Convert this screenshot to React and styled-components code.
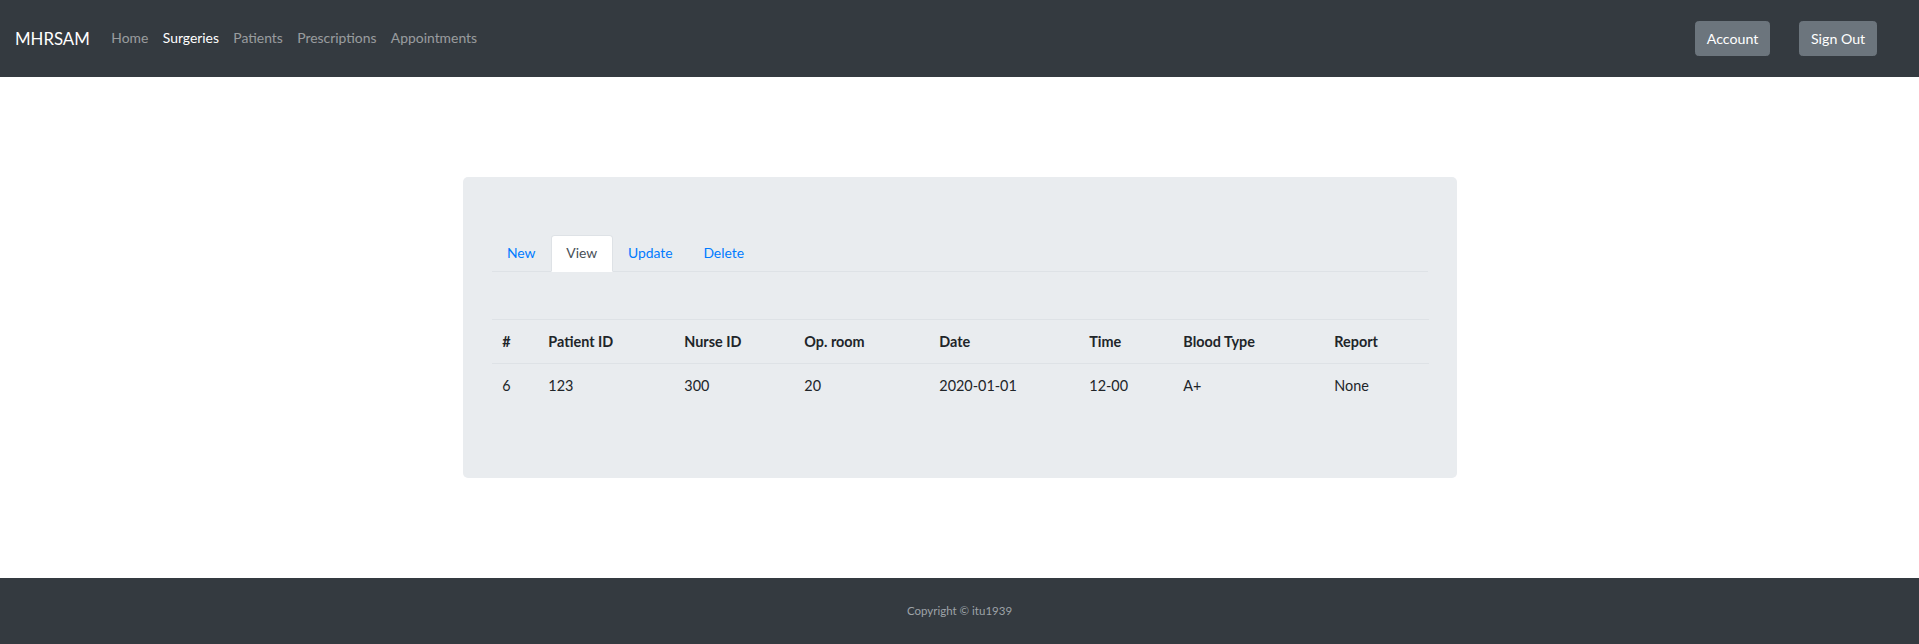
import styled, { createGlobalStyle } from "styled-components";

const GlobalStyle = createGlobalStyle`
  html, body {
    margin: 0;
    padding: 0;
  }
  body {
    font-family: Lato, "Liberation Sans", sans-serif;
    font-size: 14.4px;
    line-height: 1.5;
    color: #212529;
    background: #fff;
  }
  * {
    box-sizing: border-box;
  }
`;

const navLinks = [
  { label: "Home" },
  { label: "Surgeries", active: true },
  { label: "Patients" },
  { label: "Prescriptions" },
  { label: "Appointments" },
];

const tabs = [
  { label: "New" },
  { label: "View", active: true },
  { label: "Update" },
  { label: "Delete" },
];

const columns = [
  { title: "#", width: 46 },
  { title: "Patient ID", width: 136 },
  { title: "Nurse ID", width: 120 },
  { title: "Op. room", width: 135 },
  { title: "Date", width: 150 },
  { title: "Time", width: 94 },
  { title: "Blood Type", width: 151 },
  { title: "Report", width: 105 },
];

const rows = [["6", "123", "300", "20", "2020-01-01", "12-00", "A+", "None"]];

const App = () => {
  return (
    <Page>
      <GlobalStyle />
      <Navbar>
        <Brand href="#">MHRSAM</Brand>
        <NavList>
          {navLinks.map((link) => (
            <NavLink key={link.label} href="#" $active={link.active}>
              {link.label}
            </NavLink>
          ))}
        </NavList>
        <NavActions>
          <NavButton>Account</NavButton>
          <NavButton>Sign Out</NavButton>
        </NavActions>
      </Navbar>

      <Main>
        <Jumbotron>
          <Tabs>
            {tabs.map((tab) => (
              <Tab key={tab.label} $active={tab.active}>
                {tab.label}
              </Tab>
            ))}
          </Tabs>

          <Table>
            <colgroup>
              {columns.map((col) => (
                <col key={col.title} style={{ width: col.width }} />
              ))}
            </colgroup>
            <thead>
              <tr>
                {columns.map((col) => (
                  <Th key={col.title}>{col.title}</Th>
                ))}
              </tr>
            </thead>
            <tbody>
              {rows.map((row, idx) => (
                <tr key={idx}>
                  {row.map((cell, i) => (
                    <Td key={i}>{cell}</Td>
                  ))}
                </tr>
              ))}
            </tbody>
          </Table>
        </Jumbotron>
      </Main>

      <Footer>Copyright © itu1939</Footer>
    </Page>
  );
};

const Page = styled.div`
  min-height: 100vh;
  display: flex;
  flex-direction: column;
`;

const Navbar = styled.nav`
  height: 77px;
  padding: 0 42px 0 15px;
  background-color: #343a40;

  display: flex;
  align-items: center;
`;

const Brand = styled.a`
  font-size: 16.8px;
  line-height: 1.5;
  color: #fff;
  text-decoration: none;
  margin-right: 14.4px;
`;

const NavList = styled.div`
  display: flex;
  align-items: center;
  flex: 1;
`;

const NavLink = styled.a`
  padding: 7.2px;
  font-size: 13.9px;
  color: ${(p) => (p.$active ? "#fff" : "rgba(255, 255, 255, 0.5)")};
  text-decoration: none;
`;

const NavActions = styled.div`
  display: flex;
  gap: 29px;
`;

const NavButton = styled.button`
  height: 35px;
  padding: 0 10.8px;
  font-family: inherit;
  font-size: 14.2px;
  color: #fff;
  background-color: #6c757d;
  border: 1px solid #6c757d;
  border-radius: 3.6px;
  cursor: pointer;
`;

const Main = styled.main`
  flex: 1;
  display: flex;
  align-items: center;
  justify-content: center;
`;

const Jumbotron = styled.section`
  width: 994px;
  padding: 58px 29px 56px;
  background-color: #e9ecef;
  border-radius: 5px;
`;

const Tabs = styled.div`
  display: flex;
  border-bottom: 1px solid #dee2e6;
`;

const Tab = styled.a`
  height: 37px;
  padding: 0 14.4px;
  margin-bottom: -1px;

  display: flex;
  align-items: center;

  font-size: 13.9px;
  color: ${(p) => (p.$active ? "#495057" : "#007bff")};
  background: ${(p) => (p.$active ? "#fff" : "transparent")};
  border: 1px solid ${(p) => (p.$active ? "#dee2e6" : "transparent")};
  border-bottom-color: ${(p) => (p.$active ? "#fff" : "transparent")};
  border-radius: 3.6px 3.6px 0 0;
  cursor: pointer;
`;

const Table = styled.table`
  width: 100%;
  margin-top: 47px;
  margin-bottom: 14.4px;
  border-collapse: collapse;
  table-layout: fixed;
`;

const Th = styled.th`
  height: 44px;
  padding: 0 10.8px;
  text-align: left;
  font-weight: 700;
  border-top: 1px solid #dee2e6;
`;

const Td = styled.td`
  height: 44px;
  padding: 0 10.8px;
  border-top: 1px solid #dee2e6;
`;

const Footer = styled.footer`
  height: 66px;
  background-color: #343a40;
  color: #9ea3a8;
  font-size: 11.5px;

  display: flex;
  align-items: center;
  justify-content: center;
`;

export default App;
